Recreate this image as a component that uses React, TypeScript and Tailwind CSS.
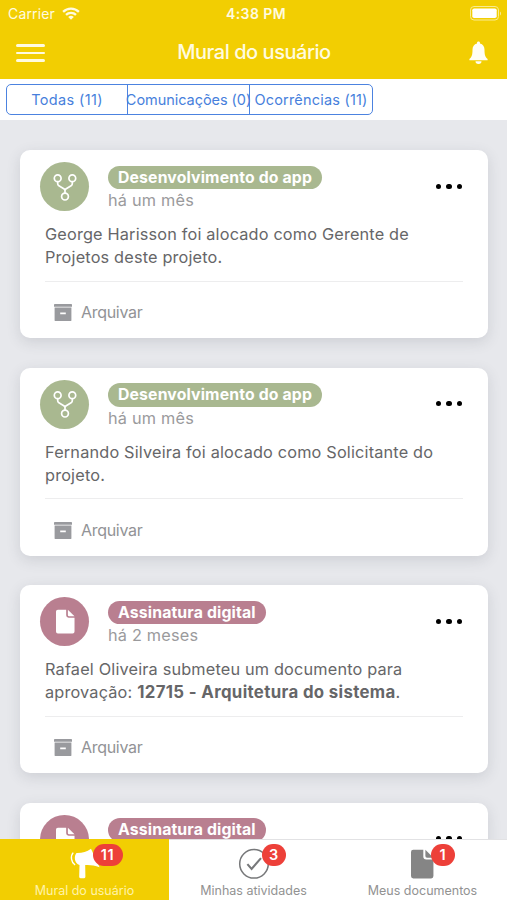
import React from "react";

interface Notice {
  id: number;
  kind: "project" | "signature";
  tag: string;
  time?: string;
  lines?: React.ReactNode[];
}

interface Tab {
  name: string;
  count: number;
  icon: React.ReactNode;
}

const notices: Notice[] = [
  {
    id: 1,
    kind: "project",
    tag: "Desenvolvimento do app",
    time: "há um mês",
    lines: ["George Harisson foi alocado como Gerente de", "Projetos deste projeto."],
  },
  {
    id: 2,
    kind: "project",
    tag: "Desenvolvimento do app",
    time: "há um mês",
    lines: ["Fernando Silveira foi alocado como Solicitante do", "projeto."],
  },
  {
    id: 3,
    kind: "signature",
    tag: "Assinatura digital",
    time: "há 2 meses",
    lines: [
      "Rafael Oliveira submeteu um documento para",
      <>
        aprovação: <b className="text-[16.8px] font-bold tracking-[0.35px]">12715 - Arquitetura do sistema</b>.
      </>,
    ],
  },
  {
    id: 4,
    kind: "signature",
    tag: "Assinatura digital",
  },
];

const WifiIcon = () => (
  <svg width="18" height="13" viewBox="0 0 18 13" className="-mt-px ml-[7px]">
    <g fill="none" stroke="#fffbe0" strokeWidth="2.3">
      <path d="M1.1 4.9a11.2 11.2 0 0 1 15.8 0" />
      <path d="M4 7.9a7 7 0 0 1 10 0" />
    </g>
    <path d="M9 12.8 6.2 10a4 4 0 0 1 5.6 0z" fill="#fffbe0" />
  </svg>
);

const BatteryIcon = () => (
  <svg width="32" height="15" viewBox="0 0 32 15">
    <rect x="0.5" y="0.5" width="28" height="13.5" rx="3.5" fill="none" stroke="#f9eb91" />
    <rect x="2.3" y="2.5" width="24.4" height="9.5" rx="1.8" fill="#fff" />
    <path d="M30 5.5v4c1.4-.6 1.4-3.4 0-4z" fill="#f9eb91" />
  </svg>
);

const BellIcon = () => (
  <svg width="19" height="24" viewBox="0 0 19 24" fill="#fffef5">
    <path d="M9.5 0.6c.9 0 1.5.6 1.5 1.4v.5c2.9.7 4.5 3 4.5 6.2 0 5 .7 7.5 3.1 9.2v1.3H.4v-1.3c2.4-1.7 3.1-4.2 3.1-9.2 0-3.2 1.6-5.5 4.5-6.2V2c0-.8.6-1.4 1.5-1.4z" />
    <path d="M6.5 20.3h6a3 2.6 0 0 1-6 0z" />
  </svg>
);

const BranchIcon = () => (
  <svg width="24" height="30" viewBox="0 0 24 30" fill="none" stroke="#fff" strokeWidth="1.7">
    <circle cx="4.7" cy="6.2" r="3.4" />
    <circle cx="19.3" cy="6.2" r="3.4" />
    <circle cx="12" cy="24.6" r="3.4" />
    <path d="M4.7 9.6v2.2q0 1.3 1.2 2l4.900 2.900q1.200.7 1.200 1.800v2.500M19.300 9.600v2.200q0 1.300-1.200 2l-4.900 2.900q-1.200.7-1.200 1.800" />
  </svg>
);

const DocumentIcon = ({ className }: { className: string }) => (
  <svg viewBox="0 0 20 26" className={className} fill="currentColor">
    <path d="M2 .5h8.700v6a2.600 2.600 0 0 0 2.600 2.600h6.200v14.400a2 2 0 0 1-2 2H2a2 2 0 0 1-2-2V2.500a2 2 0 0 1 2-2z" />
    <path d="M12.500.5 19.500 7.500h-5.600a1.400 1.400 0 0 1-1.400-1.400z" />
  </svg>
);

const ArchiveIcon = () => (
  <svg width="18" height="18" viewBox="0 0 18 18" fill="#999a9e" className="mt-[2px]">
    <path d="M.7 0h16.6q.7 0 .7.7v2H0v-2Q0 0 .7 0z" />
    <path fillRule="evenodd" d="M.6 3.6h16.8v12.600q0 .9-.9.900h-15q-.9 0-.9-.9zM6.200 8.600v1.600h5.600V8.600z" />
  </svg>
);

const MegaphoneIcon = () => (
  <svg width="32" height="32" viewBox="0 0 32 32" fill="#fff">
    <path d="M7.500 5c6 .1 10-1 14.500-4.200l8.600 18.400c-5.300-1.800-9.800-2.600-14.400-2.200l.2 11.800q0 1.300-1.200 1.400h-3.700q-1.400 0-1.300-1.400l.3-11.800C5.600 15.800 4.500 8.200 7.500 5z" />
    <path d="M4.200 4.600c-3 3.400-2.100 9.800 1.900 12.400" fill="none" stroke="#fff" strokeWidth="1.400" />
  </svg>
);

const CheckIcon = () => (
  <svg width="32" height="32" viewBox="0 0 32 32" fill="none" stroke="#77787a" strokeWidth="1.5">
    <circle cx="16" cy="15.8" r="14.3" />
    <path d="m9.4 16.1 4.200 4.800 9.400-10.800" strokeWidth="2.100" />
  </svg>
);

const filters = [
  { label: "Todas (11)", spacing: "tracking-[0.35px]" },
  { label: "Comunicações (0)", spacing: "tracking-[-0.05px]" },
  { label: "Ocorrências (11)", spacing: "tracking-[0.2px]" },
];

const tabs: Tab[] = [
  { name: "Mural do usuário", count: 11, icon: <MegaphoneIcon /> },
  { name: "Minhas atividades", count: 3, icon: <CheckIcon /> },
  { name: "Meus documentos", count: 1, icon: <DocumentIcon className="h-[30px] w-[23px] text-[#858585]" /> },
];

const NoticeCard = ({ notice }: { notice: Notice }) => {
  const isProject = notice.kind === "project";
  return (
    <article className="h-[188px] shrink-0 rounded-[10px] bg-white pl-5 pr-[26px] pt-3 shadow-[0_4px_14px_rgba(60,65,80,0.15)]">
      <header className="flex h-[50px]">
        <div
          className={`flex size-[49px] shrink-0 items-center justify-center rounded-full text-white ${
            isProject ? "bg-[#a9b890]" : "bg-[#b97f90]"
          }`}
        >
          {isProject ? <BranchIcon /> : <DocumentIcon className="ml-px h-[25px] w-[19px]" />}
        </div>
        <div className="ml-[19px] mt-[3.5px] flex flex-col items-start">
          <span
            className={`h-[23.5px] whitespace-nowrap rounded-full px-[10px] text-[15.8px] font-bold leading-[23px] tracking-[0.14px] text-white ${
              isProject ? "bg-[#a9b890]" : "bg-[#b97f90]"
            }`}
          >
            {notice.tag}
          </span>
          {notice.time && (
            <span className="text-[16.3px] leading-[23px] tracking-[0.2px] text-[#9a9a9c]">{notice.time}</span>
          )}
        </div>
        <button aria-label="Mais opções" className="ml-auto mt-[21.5px] flex h-[6px] gap-[5px]">
          <i className="size-[5.3px] rounded-full bg-black" />
          <i className="size-[5.3px] rounded-full bg-black" />
          <i className="size-[5.3px] rounded-full bg-black" />
        </button>
      </header>
      {notice.lines && (
        <>
          <div className="-mr-px ml-[5px] mt-[11px] h-[58.5px] border-b border-[#ededee] text-[16.3px] leading-[23px] tracking-[0.17px] text-[#666668]">
            {notice.lines.map((line, i) => (
              <p key={i} className="whitespace-nowrap">
                {line}
              </p>
            ))}
          </div>
          <button className="ml-[14px] mt-[18.8px] flex items-center gap-[9px] text-[16px] leading-6 tracking-[-0.3px] text-[#929396]">
            <ArchiveIcon />
            Arquivar
          </button>
        </>
      )}
    </article>
  );
};

const App = () => {
  return (
    <div className="flex h-[900px] w-[507px] flex-col overflow-hidden bg-[#e7e8ec] font-['Inter','Liberation_Sans',sans-serif]">
      {/* status bar + title */}
      <header className="h-[79px] shrink-0 bg-[#f2ce02] text-[#fffbe0]">
        <div className="grid h-[27px] grid-cols-3 items-center pl-2 pr-[5px] text-[14px]">
          <div className="flex items-center tracking-[0.15px]">
            Carrier
            <WifiIcon />
          </div>
          <span className="pl-[2px] text-center font-semibold tracking-[0.4px]">4:38 PM</span>
          <div className="flex justify-end">
            <BatteryIcon />
          </div>
        </div>
        <div className="grid h-[52px] grid-cols-[60px_1fr_60px] items-center pb-[2px]">
          <button aria-label="Menu" className="ml-4 mt-[2px] flex w-[29px] flex-col gap-[5px]">
            <i className="h-[2.5px] rounded-full bg-[#fffbe0]" />
            <i className="h-[2.5px] rounded-full bg-[#fffbe0]" />
            <i className="h-[2.5px] rounded-full bg-[#fffbe0]" />
          </button>
          <h1 className="pl-px text-center text-[20px] font-medium tracking-[-0.45px]">Mural do usuário</h1>
          <button aria-label="Notificações" className="flex justify-end pr-[19px] pt-px">
            <BellIcon />
          </button>
        </div>
      </header>

      {/* filters */}
      <nav className="h-[41px] shrink-0 bg-white pl-[6px] pt-[5px]">
        <div className="grid h-[31px] w-[367px] grid-cols-[121px_122px_122px] divide-x divide-[#4c83e0] rounded-[5px] border border-[#4c83e0]">
          {filters.map((filter) => (
            <button
              key={filter.label}
              className={`flex items-center justify-center whitespace-nowrap text-[14.5px] text-[#477fdc] ${filter.spacing}`}
            >
              {filter.label}
            </button>
          ))}
        </div>
      </nav>

      <main className="flex min-h-0 flex-1 flex-col gap-[29.5px] overflow-hidden pl-5 pr-[19px] pt-[30px]">
        {notices.map((notice) => (
          <NoticeCard key={notice.id} notice={notice} />
        ))}
      </main>

      {/* bottom tabs */}
      <nav className="z-10 grid h-[61px] shrink-0 grid-cols-3 border-t border-[#e2e2e4] bg-white">
        {tabs.map((tab, i) => (
          <button
            key={tab.name}
            className={`-mt-px flex flex-col items-center pt-[9px] text-[12.5px] ${
              i === 0 ? "bg-[#f2ce02] text-[#fff3a8]" : "text-[#929292]"
            }`}
          >
            <span className="relative flex h-8 w-8 items-center justify-center">
              {tab.icon}
              <b
                className={`absolute -top-[4px] left-[24px] flex h-[22px] items-center justify-center rounded-full bg-[#ed4039] text-[14.5px] font-semibold text-white ${
                  tab.count > 9 ? "w-[30px] tracking-[0.6px]" : "w-[24px]"
                }`}
              >
                {tab.count}
              </b>
            </span>
            <span className="mt-[1.5px] leading-[18px]">{tab.name}</span>
          </button>
        ))}
      </nav>
    </div>
  );
};

export default App;
